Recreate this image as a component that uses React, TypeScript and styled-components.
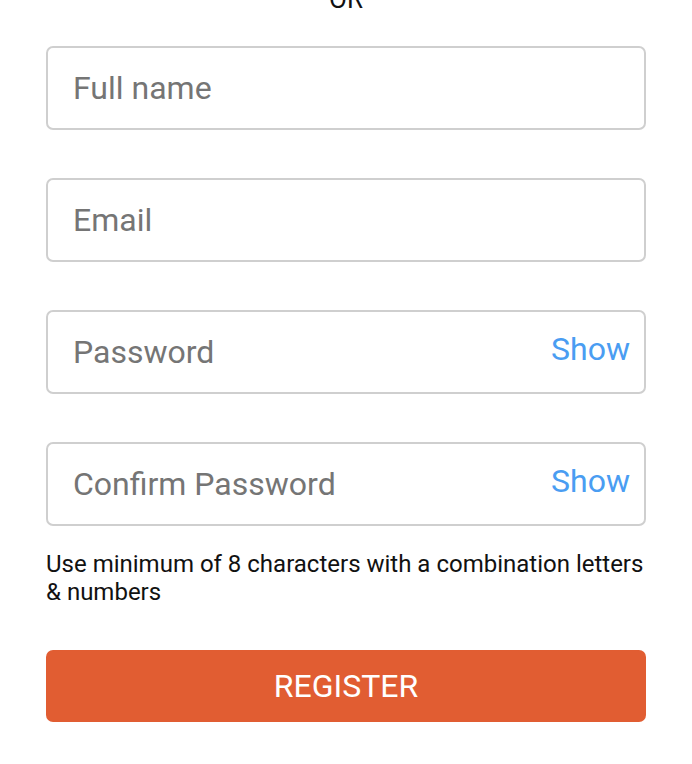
import styled, { createGlobalStyle } from "styled-components";

const GlobalStyle = createGlobalStyle`
  html, body {
    margin: 0;
    padding: 0;
    background: #ffffff;
    font-family: Roboto, "Noto Sans", sans-serif;
  }
`;

type Field = {
  placeholder: string;
  type: string;
  toggle?: boolean;
};

const fields: Field[] = [
  { placeholder: "Full name", type: "text" },
  { placeholder: "Email", type: "email" },
  { placeholder: "Password", type: "password", toggle: true },
  { placeholder: "Confirm Password", type: "password", toggle: true },
];

export default function App() {
  return (
    <>
      <GlobalStyle />
      <Page>
        <Divider>OR</Divider>
        <Form onSubmit={(e) => e.preventDefault()}>
          <Fields>
            {fields.map(({ placeholder, type, toggle }) => (
              <InputWrap key={placeholder}>
                <Input type={type} placeholder={placeholder} $withToggle={!!toggle} />
                {toggle && <ShowButton type="button">Show</ShowButton>}
              </InputWrap>
            ))}
          </Fields>
          <Hint>Use minimum of 8 characters with a combination letters &amp; numbers</Hint>
          <RegisterButton type="submit">REGISTER</RegisterButton>
        </Form>
      </Page>
    </>
  );
}

const Page = styled.div`
  width: 600px;
  margin: -17px auto 0;
  padding: 0 0 40px;
`;

const Divider = styled.div`
  text-align: center;
  font-size: 26px;
  line-height: 32px;
  color: #111;
  margin-bottom: 31px;
`;

const Form = styled.form`
  display: flex;
  flex-direction: column;
`;

const Fields = styled.div`
  display: flex;
  flex-direction: column;
  gap: 48px;
`;

const InputWrap = styled.div`
  position: relative;
`;

const Input = styled.input<{ $withToggle: boolean }>`
  box-sizing: border-box;
  width: 100%;
  height: 84px;
  border: 2px solid #cfcfcf;
  border-radius: 7px;
  padding: 0 ${({ $withToggle }) => ($withToggle ? "110px" : "24px")} 0 25px;
  font-family: Roboto, "Noto Sans", sans-serif;
  font-size: 32px;
  color: #333;
  outline: none;

  &::placeholder {
    color: #757575;
  }
`;

const ShowButton = styled.button`
  position: absolute;
  right: 16px;
  top: 19px;
  border: none;
  background: none;
  padding: 0;
  font-family: Roboto, "Noto Sans", sans-serif;
  font-size: 32px;
  line-height: 40px;
  color: #4a9df2;
  cursor: pointer;
`;

const Hint = styled.p`
  margin: 24px 0 0;
  font-size: 24px;
  line-height: 28px;
  color: #111;
`;

const RegisterButton = styled.button`
  margin-top: 44px;
  height: 72px;
  border: none;
  border-radius: 7px;
  background: #e15d32;
  color: #fff;
  font-family: Roboto, "Noto Sans", sans-serif;
  font-size: 32px;
  cursor: pointer;
`;
